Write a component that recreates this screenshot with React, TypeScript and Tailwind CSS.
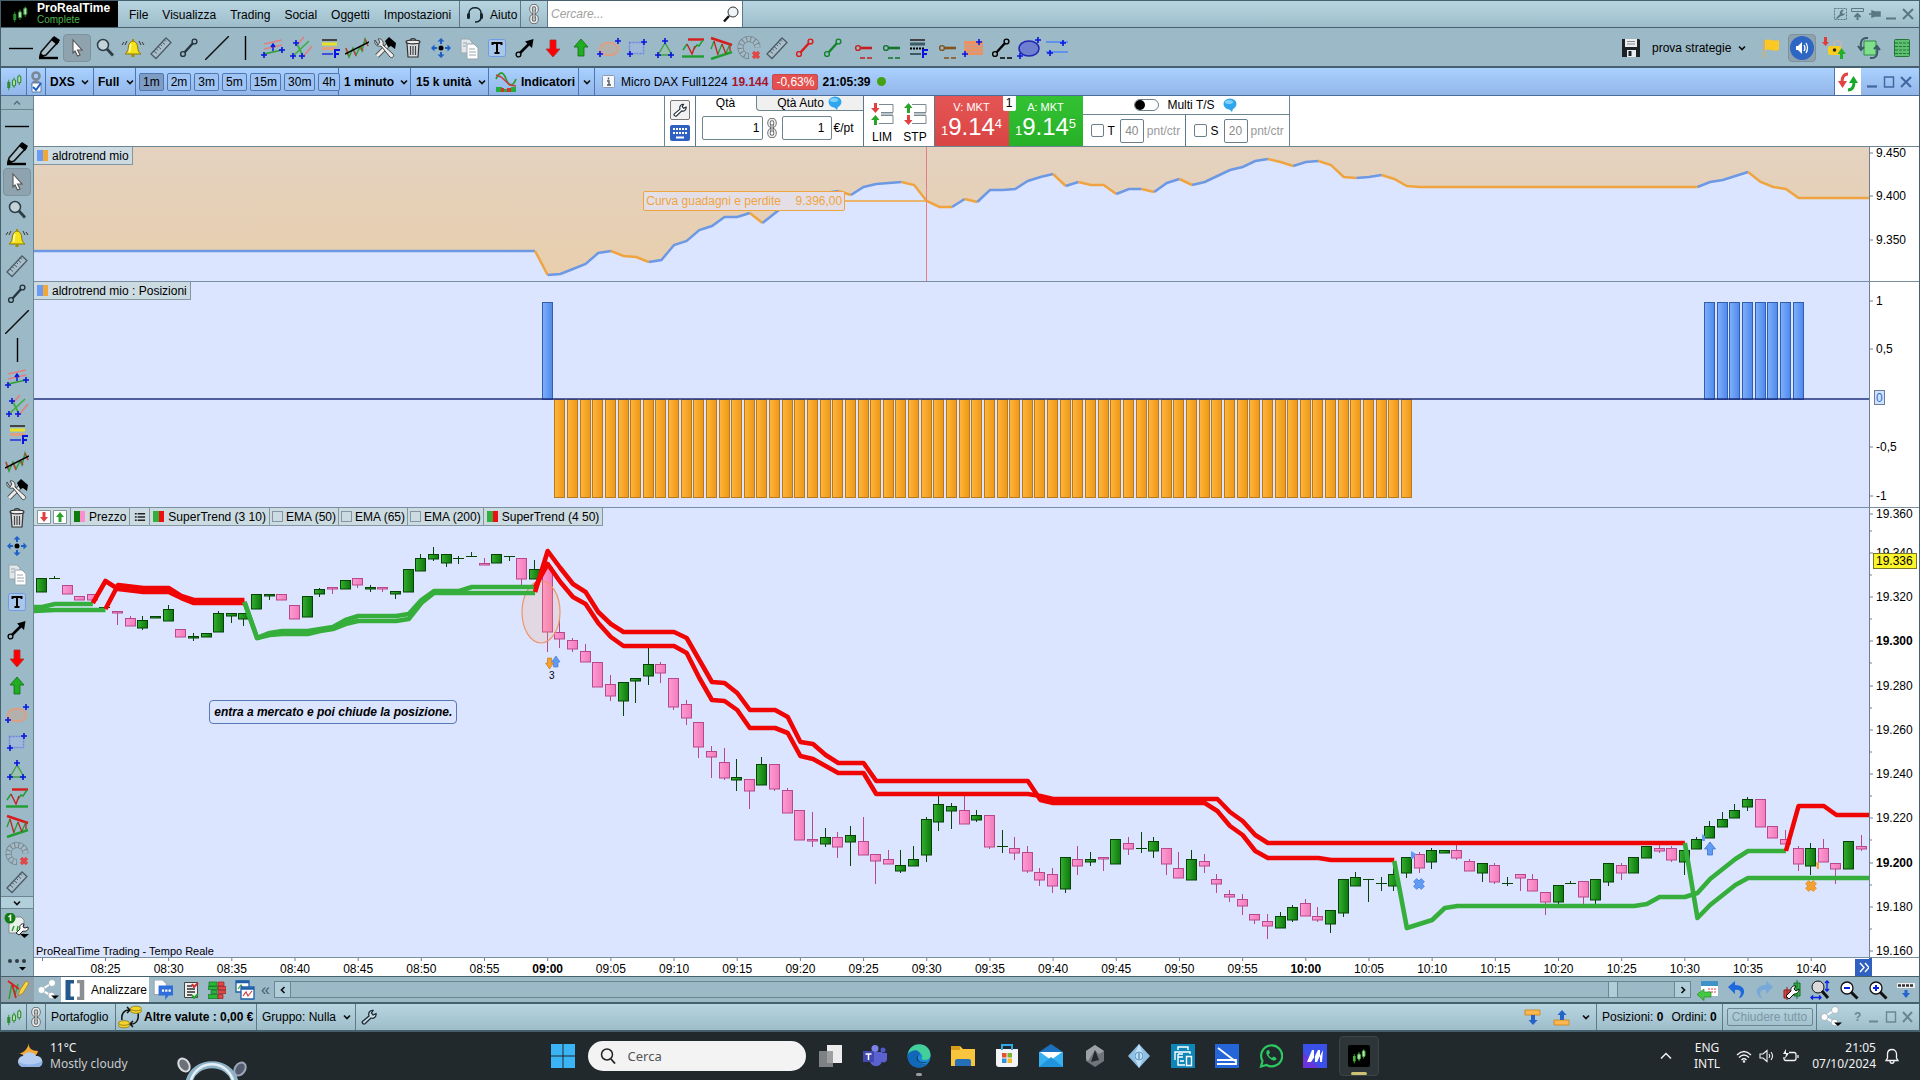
import type { ReactNode } from "react";

type IconProps = { children: ReactNode; size?: string; box?: string };

function Icon({ children, size = "size-6", box = "0 0 24 24" }: IconProps) {
  return (
    <svg viewBox={box} className={`${size} shrink-0`} fill="none" aria-hidden="true">
      {children}
    </svg>
  );
}

function Plus({ x, y }: { x: number; y: number }) {
  return <path d={`M${x - 3} ${y}h6M${x} ${y - 3}v6`} stroke="#0a14e0" strokeWidth="1.6" />;
}

function Segment({ color, dashed }: { color: string; dashed?: boolean }) {
  return (
    <Icon>
      <path d="M7 17 17 6" stroke={color} strokeWidth="2.4" />
      <circle cx="6" cy="18" r="2.4" fill="#9bb9c7" stroke={color} strokeWidth="1.4" />
      <circle cx="17.5" cy="5.5" r="2.4" fill="#9bb9c7" stroke={color} strokeWidth="1.4" />
      {dashed && <path d="M11 22h5M18 22h5" stroke={color} strokeWidth="1.4" />}
    </Icon>
  );
}

function Ray({ color }: { color: string }) {
  return (
    <Icon>
      <path d="M9 12h14" stroke={color} strokeWidth="2.6" />
      <circle cx="9" cy="12" r="2.4" fill="#9bb9c7" stroke={color} strokeWidth="1.4" />
      <path d="M11 22h5M18 22h5" stroke={color} strokeWidth="1.3" />
    </Icon>
  );
}

function Ruler() {
  return (
    <Icon>
      <path d="M2 18 17 2l5 4.5L7 22.5z" stroke="#4d5c68" strokeWidth="1.3" fill="#a9bfca" />
      <path d="m5 15 3 2.5m-1-5 2 2m0-4 3 2.5m-1-5 2 2m0-4 3 2.5m-1-5 2 2" stroke="#4d5c68" />
    </Icon>
  );
}

function Candles({ size = "size-5", color = "#2e8b2e" }: { size?: string; color?: string }) {
  return (
    <Icon size={size}>
      <path d="M5 9v14M12 6v14M19 2v14" stroke={color} strokeWidth="1.2" />
      <path d="M3 12h4v8H3z" fill={color} />
      <rect x="10" y="9" width="4" height="8" rx="1.5" fill="#bfe0c0" stroke={color} strokeWidth="1.5" />
      <rect x="17" y="4" width="4" height="9" rx="1.5" fill="#bfe0c0" stroke={color} strokeWidth="1.5" />
    </Icon>
  );
}

function Chain() {
  return (
    <Icon size="h-[20px] w-[14px]" box="0 0 14 20">
      <rect x="4" y="1.5" width="6" height="7" rx="3" stroke="#666" strokeWidth="3.4" />
      <rect x="4" y="11.5" width="6" height="7" rx="3" stroke="#666" strokeWidth="3.4" />
      <rect x="4" y="1.5" width="6" height="7" rx="3" stroke="#eee" strokeWidth="1.6" />
      <rect x="4" y="11.5" width="6" height="7" rx="3" stroke="#eee" strokeWidth="1.6" />
      <path d="M7 6v8" stroke="#555" strokeWidth="3" />
      <path d="M7 6v8" stroke="#eee" strokeWidth="1.2" />
    </Icon>
  );
}

function Chevron() {
  return (
    <Icon size="size-2" box="0 0 8 8">
      <path d="m1 2.5 3 3 3-3" stroke="#111" strokeWidth="1.7" />
    </Icon>
  );
}

function Wrench({ size = "size-4", fill = "#fff" }: { size?: string; fill?: string }) {
  return (
    <Icon size={size} box="0 0 16 16">
      <path
        d="M1.5 12.5 8 7C7 4 9 1 12 1.5L10.5 4l1.5 2 3-1.3C15.5 8 12.5 10 10 9L4 14.8c-1.5 1-3.5-1-2.5-2.3z"
        fill={fill}
        stroke="#1c2a33"
        strokeWidth="1.3"
      />
    </Icon>
  );
}

function Magnifier({ sign }: { sign: string }) {
  return (
    <Icon size="size-5" box="0 0 20 20">
      <circle cx="8" cy="8" r="6" fill="#fff" stroke="#111" strokeWidth="1.3" />
      <path d="m12 12 6.5 6.5" stroke="#111" strokeWidth="3" />
      <path d={sign} stroke="#0a20e0" strokeWidth="2" />
    </Icon>
  );
}

function Share() {
  return (
    <Icon size="size-[22px]" box="0 0 22 22">
      <path d="M15 4 4 11l11 6" stroke="#fff" strokeWidth="2" />
      <g fill="#fff" stroke="#8a9aa3" strokeWidth=".6">
        <circle cx="15" cy="4" r="3.5" />
        <circle cx="4.5" cy="11" r="3.5" />
        <circle cx="14.5" cy="16.5" r="3.3" />
      </g>
      <path d="M14 16.5h8l-4 3.5z" fill="#000" />
    </Icon>
  );
}

function Bubble() {
  return (
    <Icon size="size-[14px]" box="0 0 14 14">
      <ellipse cx="7" cy="6" rx="6.5" ry="5.5" fill="#2fa6ee" />
      <path d="m5 10 4 4 1.5-5z" fill="#2fa6ee" />
      <ellipse cx="6" cy="4" rx="4" ry="2" fill="#7fd0fa" />
    </Icon>
  );
}

function FibIcon({ dark }: { dark?: boolean }) {
  const lines = dark ? ["#3e5a66", "#000", "#3e5a66"] : ["#e8e020", "#e0a080", "#3f51d8"];
  return (
    <Icon>
      <path d="M5 4h15" stroke="#444" strokeWidth="2" />
      <path d="M5 8h15" stroke={lines[0]} strokeWidth="3" />
      <path d="M5 12.5h15" stroke={lines[1]} strokeWidth={dark ? 2 : 3} strokeDasharray={dark ? "2 1" : undefined} />
      <path d="M5 18h11" stroke={lines[2]} strokeWidth="2" />
      <path d="M18 22v-8h5M18 18h4" stroke="#0a14e0" strokeWidth="2" />
    </Icon>
  );
}

const tools: { name: string; icon: ReactNode }[] = [
  { name: "Linea orizzontale", icon: <Icon><path d="M0 12.5h24" stroke="#000" strokeWidth="1.4" /></Icon> },
  {
    name: "Matita",
    icon: (
      <Icon>
        <path d="M4 16 16 2l5 4L9 19l-6 2z" fill="#a9bfca" stroke="#111" strokeWidth="1.6" />
        <path d="m14 4 3-4 6 4-3 5zM3 17l5 3-6 2z" fill="#000" />
        <path d="M2 22h19" stroke="#000" strokeWidth="2.4" />
      </Icon>
    ),
  },
  {
    name: "Cursore",
    icon: (
      <Icon>
        <path d="m8 4 9 10h-4.500l2.500 5-2.500 1-2.500-5L8 17z" fill="#fff" stroke="#555" strokeWidth="1.1" />
      </Icon>
    ),
  },
  {
    name: "Zoom",
    icon: (
      <Icon>
        <circle cx="10" cy="9" r="5.5" fill="#c2d3da" stroke="#2f3d47" strokeWidth="1.5" />
        <path d="m14 13 6 6.5" stroke="#2f3d47" strokeWidth="2.8" />
      </Icon>
    ),
  },
  {
    name: "Allarme",
    icon: (
      <Icon>
        <path d="M4 18c3-2 3-4 3.500-8 .5-3 2-4.500 4.500-5 2.500.5 4 2 4.500 5 .5 4 .5 6 3.500 8z" fill="#f6e21c" stroke="#8c7a00" />
        <path d="M10 8c-1 2-1 5-1.500 8" stroke="#fff9a0" strokeWidth="1.8" />
        <path d="M10.500 18h3v3h-3zM11 3h2v2h-2z" fill="#a38d00" />
        <path d="M3 6 1 9m5-4L4 9m17-3 2 3m-5-4 2 4" stroke="#333" />
      </Icon>
    ),
  },
  { name: "Righello", icon: <Ruler /> },
  { name: "Segmento", icon: <Segment color="#26343d" /> },
  { name: "Linea", icon: <Icon><path d="M0 24 24 0" stroke="#111" strokeWidth="1.5" /></Icon> },
  { name: "Linea verticale", icon: <Icon><path d="M12.500 0v24" stroke="#000" strokeWidth="1.4" /></Icon> },
  {
    name: "Canale",
    icon: (
      <Icon>
        <path d="M3 8 21 4M3 13l18-4" stroke="#e08080" strokeWidth="1.7" />
        <path d="m3 18 18-4" stroke="#2e9e2e" strokeWidth="1.7" />
        <path d="M12 15V9m-2 2 2-3 2 3" stroke="#0a14e0" strokeWidth="1.4" />
        <Plus x={3} y={19} /><Plus x={21} y={14} />
      </Icon>
    ),
  },
  {
    name: "Forchetta",
    icon: (
      <Icon>
        <path d="m8 9 7-8m-1 20 9-11" stroke="#e08080" strokeWidth="1.7" />
        <path d="M4 20 20 5M8 8l6 12" stroke="#3fae3f" strokeWidth="1.7" />
        <Plus x={7} y={7} /><Plus x={4} y={20} /><Plus x={13} y={20} />
      </Icon>
    ),
  },
  { name: "Fibonacci", icon: <FibIcon /> },
  {
    name: "Regressione",
    icon: (
      <Icon>
        <path d="m1 12 3 9 4-9 3 7 4-8 2 4 3-12 3 7" stroke="#2e9e2e" strokeWidth="1.4" />
        <path d="m1 12 2 7m5-6 3 7m5-9 2 4m2-12 3 7" stroke="#c83c3c" strokeWidth="1.4" />
        <path d="M0 18 24 6" stroke="#000" strokeWidth="1.4" />
      </Icon>
    ),
  },
  {
    name: "Strumenti",
    icon: (
      <Icon>
        <path d="M17 7 4 20" stroke="#555" strokeWidth="5" />
        <path d="M17 7 4 20" stroke="#eee" strokeWidth="3" />
        <path d="m12 5 4-4 7 6-1 6-4-3-3 1z" fill="#000" />
        <path d="M2 4c-1 4 2 7 6 6l9 11c2 2 5-1 3-3L10 9c1-4-2-7-5-6l2 3-2 3z" fill="#eee" stroke="#444" />
      </Icon>
    ),
  },
  {
    name: "Cestino",
    icon: (
      <Icon>
        <path d="M6 7h12l-1 14H7z" fill="#d9dde0" stroke="#333" strokeWidth="1.2" />
        <path d="M9.500 10v9m2.500-9v9m2.500-9v9" stroke="#444" strokeWidth="1.2" />
        <ellipse cx="12" cy="6" rx="7" ry="1.8" fill="#eee" stroke="#333" strokeWidth="1.2" />
        <path d="M9.500 4c0-2 5-2 5 0" stroke="#333" strokeWidth="1.2" />
      </Icon>
    ),
  },
  {
    name: "Sposta",
    icon: (
      <Icon>
        <circle cx="12" cy="12" r="2.500" fill="#000" />
        <path d="M12 8V4M12 16v4M8 12H4M16 12h4" stroke="#1e5fc8" strokeWidth="2" />
        <path d="M8.500 5.500 12 2l3.500 3.500zM8.500 18.500 12 22l3.500-3.500zM5.500 8.500 2 12l3.500 3.500zM18.500 8.500 22 12l-3.500 3.500z" fill="#1e5fc8" />
      </Icon>
    ),
  },
  {
    name: "Copia",
    icon: (
      <Icon>
        <path d="M4 3h8l3 3v11H4z" fill="#dfe7eb" stroke="#9aa5ab" />
        <path d="M10 8h7l4 4v11H10z" fill="#fff" stroke="#9aa5ab" />
        <path d="M12 13h6m-6 3h7m-7 3h7M6 7h4m-4 3h3" stroke="#9aa5ab" />
      </Icon>
    ),
  },
  {
    name: "Testo",
    icon: (
      <Icon>
        <rect x="3.5" y="3.5" width="17" height="17" rx="2" fill="#aac6e8" stroke="#6f9be6" />
        <path d="M7.500 9V7h9v2M12 7v10m-2.500 0h5" stroke="#000" strokeWidth="2" />
      </Icon>
    ),
  },
  {
    name: "Freccia",
    icon: (
      <Icon>
        <path d="M6 18 17 7" stroke="#000" strokeWidth="2.6" />
        <path d="M12 5.500 20.500 3 19 12z" fill="#000" />
        <circle cx="5.5" cy="18.5" r="2.4" fill="#9bb9c7" stroke="#000" strokeWidth="1.3" />
      </Icon>
    ),
  },
  { name: "Freccia rossa", icon: <Icon><path d="M9 4h6v9h4l-7 8-7-8h4z" fill="#f00" stroke="#a33" strokeWidth=".8" /></Icon> },
  { name: "Freccia verde", icon: <Icon><path d="M9 20h6v-9h4l-7-8-7 8h4z" fill="#1fae1f" stroke="#176b17" strokeWidth=".8" /></Icon> },
  {
    name: "Ellisse",
    icon: (
      <Icon>
        <ellipse cx="12" cy="13" rx="9.500" ry="6.500" fill="#b4b0ac" stroke="#e89a78" strokeWidth="1.5" />
        <Plus x={21} y={5} /><Plus x={3} y={18} />
      </Icon>
    ),
  },
  {
    name: "Rettangolo",
    icon: (
      <Icon>
        <path d="M4.500 6.500h14v11h-14z" fill="#9fb8d8" stroke="#6f86e0" strokeWidth="1.4" strokeDasharray="2 1" />
        <Plus x={19} y={6} /><Plus x={5} y={18} />
      </Icon>
    ),
  },
  {
    name: "Triangolo",
    icon: (
      <Icon>
        <path d="m12 7-7 12h14z" fill="#9cc0b4" stroke="#3fa04a" strokeWidth="1.4" />
        <Plus x={12} y={5} /><Plus x={5} y={19} /><Plus x={18} y={19} />
      </Icon>
    ),
  },
  {
    name: "Doppio massimo",
    icon: (
      <Icon>
        <path d="M7 3.500h16" stroke="#d81c1c" strokeWidth="2.4" />
        <path d="M1 20.500h22" stroke="#1e9e2e" strokeWidth="2.4" />
        <path d="m2 14 4-6m7 5 3-4 2 1 4-6" stroke="#1e9e2e" strokeWidth="1.4" />
        <path d="m6 8 5 10 3-8" stroke="#c82020" strokeWidth="1.4" />
      </Icon>
    ),
  },
  {
    name: "Cuneo",
    icon: (
      <Icon>
        <path d="m2 2 21 7" stroke="#d81c1c" strokeWidth="2.4" />
        <path d="m2 23 21-7" stroke="#1e9e2e" strokeWidth="2.4" />
        <path d="m2 13 3-8m4 13 4-10m4 9 4-9" stroke="#1e9e2e" strokeWidth="1.3" />
        <path d="m5 5 4 14m4-11 4 10m4-9v6" stroke="#c82020" strokeWidth="1.3" />
      </Icon>
    ),
  },
  {
    name: "Gann",
    icon: (
      <Icon>
        <path d="M20.500 11.500A8.500 8.500 0 1 0 12 20" stroke="#75858f" strokeWidth="6" />
        <path d="M20.500 11.500A8.500 8.500 0 1 0 12 20" stroke="#a4bac5" strokeWidth="4.600" strokeDasharray="3 1" />
        <path d="m16 16 6 6m0-6-6 6" stroke="#e04848" strokeWidth="3.400" />
      </Icon>
    ),
  },
  { name: "Misura", icon: <Ruler /> },
  { name: "Segmento rosso", icon: <Segment color="#e01818" /> },
  { name: "Segmento verde", icon: <Segment color="#12852a" /> },
  { name: "Semiretta rossa", icon: <Ray color="#c81e1e" /> },
  { name: "Semiretta verde", icon: <Ray color="#12752a" /> },
  { name: "Ritracciamento", icon: <FibIcon dark /> },
  { name: "Semiretta marrone", icon: <Ray color="#80521c" /> },
  {
    name: "Zona",
    icon: (
      <Icon>
        <path d="M3 5h19v14H3z" fill="#f0905c" />
        <path d="M3 9h19M3 12h19M3 16h19" stroke="#c8a090" strokeWidth="1.5" />
        <Plus x={18} y={6} /><Plus x={4} y={18} />
      </Icon>
    ),
  },
  { name: "Segmento nero", icon: <Segment color="#000" dashed /> },
  {
    name: "Ellisse blu",
    icon: (
      <Icon>
        <ellipse cx="12" cy="12.500" rx="10" ry="7.500" fill="#6f7fd0" stroke="#2226b4" strokeWidth="1.5" />
        <Plus x={21} y={4} /><Plus x={3} y={20} />
      </Icon>
    ),
  },
  {
    name: "Parallele",
    icon: (
      <Icon>
        <path d="M1 6h22M1 16h22" stroke="#5f92ee" strokeWidth="2.2" />
        <path d="M12 22h10" stroke="#8fb2ee" />
        <Plus x={18} y={7} /><Plus x={5} y={17} />
      </Icon>
    ),
  },
];

function ToolButton({ name, icon }: { name: string; icon: ReactNode }) {
  const active = name === "Cursore";
  return (
    <button
      aria-label={name}
      className={`flex size-7 shrink-0 items-center justify-center rounded-sm border ${
        active ? "border-[#7c929e] bg-[#8fa3ae]" : "border-transparent"
      }`}
    >
      {icon}
    </button>
  );
}

function Drop({ label, value, bold = true }: { label: string; value: string; bold?: boolean }) {
  return (
    <label className="flex h-full items-center gap-1.5">
      <select aria-label={label} className={`appearance-none bg-transparent ${bold ? "font-bold" : ""}`}>
        <option>{value}</option>
      </select>
      <Chevron />
    </label>
  );
}

/* ---------- data ---------- */

const STEP = 12.635;
const barX = (i: number) => 42.3 + i * STEP;

// colour, body top, body bottom, wick top, wick bottom; one candle per minute from 08:20
const candles =
  "g 578 592 578 592|g 578 578 576 579|p 585 594 585 594|p 596 600 596 600|p 594 600 594 600|g 607 607 607 607|p 611 613 611 625|p 618 626 616 626|g 620 628 616 630|g 616 618 616 618|" +
  "g 609 621 605 621|p 629 637 629 637|g 636 638 633 641|g 633 637 633 637|g 613 632 611 632|g 613 616 613 623|g 613 619 613 626|g 594 609 594 609|g 594 596 594 600|p 594 600 594 600|" +
  "p 605 619 605 619|g 596 617 596 617|g 589 594 588 597|p 587 589 587 594|g 580 589 580 589|p 578 585 578 588|g 587 589 585 592|p 587 589 587 592|g 591 594 591 599|g 569 592 569 592|" +
  "g 558 571 554 571|g 554 559 547 561|g 554 563 554 567|g 558 558 556 564|g 556 556 552 557|p 563 565 558 565|g 554 563 554 563|g 556 556 556 561|p 558 579 558 588|g 569 579 560 579|" +
  "p 567 632 567 652|p 632 639 617 648|p 640 649 638 652|p 651 662 644 662|p 662 687 662 687|p 684 696 675 701|g 682 701 682 716|g 678 681 678 703|g 664 676 647 685|p 664 673 662 683|" +
  "p 678 707 678 710|p 704 718 700 725|p 722 747 722 758|p 751 757 746 778|p 762 778 748 780|g 777 780 759 791|p 779 791 779 809|g 764 785 757 785|p 764 789 764 791|p 790 813 788 813|" +
  "p 810 840 810 840|p 839 841 812 847|g 837 844 828 847|p 837 847 832 858|g 835 842 826 866|p 841 855 817 855|p 854 861 854 884|p 859 864 850 864|g 865 871 850 873|g 859 866 846 866|" +
  "g 819 855 817 862|g 804 822 795 831|g 806 811 803 829|p 810 824 796 824|g 815 820 810 822|p 815 847 815 849|g 846 846 830 853|p 848 853 837 860|p 852 871 846 873|p 872 880 868 886|" +
  "p 874 886 868 893|g 857 889 857 893|p 859 866 846 875|g 859 862 852 866|p 857 859 857 871|g 839 864 839 864|p 843 849 837 855|g 848 848 832 853|g 841 851 837 858|p 848 864 848 875|" +
  "p 868 878 852 878|g 859 880 850 880|p 861 866 854 873|p 879 884 874 893|p 894 897 890 902|p 899 906 894 915|p 914 920 914 924|p 921 926 914 939|g 916 928 912 928|g 907 920 905 922|" +
  "p 903 916 899 916|p 916 920 907 922|g 910 924 910 933|g 879 913 879 917|g 877 886 872 886|g 879 879 879 902|g 883 883 877 891|g 874 886 862 891|g 857 873 857 878|p 854 868 852 873|" +
  "g 850 862 848 869|g 850 853 850 853|p 850 858 841 860|p 861 871 859 871|g 863 873 863 882|p 865 882 863 884|g 883 883 877 886|p 874 878 874 891|p 879 891 874 891|p 892 902 892 915|" +
  "g 885 902 885 904|g 883 883 881 884|p 881 897 881 906|g 879 900 879 904|g 863 882 863 886|p 865 873 863 880|g 857 873 857 873|g 846 858 846 858|p 848 851 845 853|p 848 860 846 862|" +
  "g 850 862 850 875|g 839 849 837 849|g 826 838 821 838|g 819 827 812 827|g 810 818 804 818|g 799 807 797 811|p 799 827 799 827|p 826 838 826 838|p 839 844 830 844|p 848 864 846 871|" +
  "g 848 866 843 875|p 848 862 839 862|p 863 869 863 884|g 841 869 841 869|p 846 849 835 851";

const candleRows = candles.split("|").map((row) => {
  const [kind, ...ys] = row.split(" ");
  return { up: kind === "g", ys: ys.map(Number) };
});

type Point = [number, number];

const trends: { color: string; points: Point[] }[] = [
  { color: "#35ae3c", points: [[-0.7, 607], [0, 607], [1, 604], [4, 604]] },
  { color: "#35ae3c", points: [[-0.7, 611], [1, 610], [5, 610]] },
  { color: "#f00505", points: [[4, 603], [5, 581], [6, 589], [8, 592], [10, 592], [11, 598], [12, 603], [16, 603]] },
  { color: "#f00505", points: [[5, 609], [6, 585], [8, 588], [10, 588], [11, 596], [12, 600], [16, 600]] },
  {
    color: "#35ae3c",
    points: [[16, 602], [17, 638], [18, 633], [19, 631], [21, 631], [22, 629], [23, 627], [24, 620], [25, 616], [28, 616], [29, 614], [30, 600], [31, 591], [33, 591], [34, 587], [39, 587]],
  },
  {
    color: "#35ae3c",
    points: [[16, 602], [17, 638], [18, 635], [19, 634], [21, 634], [22, 631], [23, 629], [24, 624], [25, 621], [28, 621], [29, 619], [30, 603], [31, 593], [39, 593]],
  },
  {
    color: "#f00505",
    points: [[39, 592], [40, 551], [41, 568], [42, 584], [43, 592], [44, 612], [45, 624], [46, 632], [50, 632], [51, 638], [52, 660], [53, 682], [54, 683], [55, 693], [56, 710], [58, 710], [59, 717], [60, 742], [61, 744], [62, 755], [63, 763], [65, 763], [66, 781], [78, 781], [79, 800], [80, 803], [92, 803], [93, 811], [94, 826], [95, 835], [96, 851], [97, 858], [101, 858], [102, 860], [107, 860]],
  },
  {
    color: "#f00505",
    points: [[39, 587], [40, 564], [41, 582], [42, 597], [43, 604], [44, 623], [45, 637], [46, 646], [50, 646], [51, 653], [52, 678], [53, 700], [54, 701], [55, 710], [56, 728], [58, 728], [59, 733], [60, 756], [61, 759], [62, 766], [63, 773], [65, 773], [66, 794], [78, 794], [79, 796], [80, 799], [93, 799], [94, 812], [95, 821], [96, 835], [97, 843], [130, 843]],
  },
  {
    color: "#35ae3c",
    points: [[107, 861], [108, 928], [109, 924], [110, 920], [111, 908], [112, 906], [126, 906], [127, 904], [128, 897], [130, 897], [131, 893], [132, 879], [133, 869], [134, 859], [135, 851], [138, 851]],
  },
  { color: "#35ae3c", points: [[130, 843], [131, 918], [132, 905], [133, 895], [134, 885], [135, 878], [144.7, 878]] },
  { color: "#f00505", points: [[138, 851], [139, 806], [141, 806], [142, 815], [144.7, 815]] },
];

// profit curve from 08:59 to 10:09, one value per minute
const profit = [
  251, 275, 274, 269, 264, 253, 251, 256, 257, 262, 260, 245, 241, 230, 226, 217, 217, 213, 223, 213, 203, 198, 195, 193,
  191, 195, 187, 184, 183, 182, 185, 201, 207, 207, 199, 202, 190, 190, 189, 181, 177, 174, 186, 182, 185, 185, 194, 189,
  189, 192, 183, 179, 185, 182, 176, 170, 167, 161, 159, 162, 166, 162, 161, 165, 177, 178, 177, 175, 179, 186, 187,
];
const curve: Point[] = [
  [-0.7, 251],
  ...profit.map((y, k): Point => [39 + k, y]),
  [131, 187], [132, 182], [133, 180], [134, 176], [135, 172], [136, 182], [137, 187], [138, 189], [139, 198], [144.7, 198],
];
const toPoints = (pts: Point[]) => pts.map(([i, y]) => `${barX(i)},${y}`).join(" ");

function curveRuns() {
  const runs: { color: string; points: Point[] }[] = [];
  let color = "#6c98e4";
  for (let k = 1; k < curve.length; k++) {
    const diff = curve[k][1] - curve[k - 1][1];
    if (diff > 0) color = "#f0a440";
    if (diff < 0) color = "#6c98e4";
    const last = runs[runs.length - 1];
    if (last && last.color === color) last.points.push(curve[k]);
    else runs.push({ color, points: [curve[k - 1], curve[k]] });
  }
  return runs;
}

const longs = [40, 132, 133, 134, 135, 136, 137, 138, 139];
const shorts = Array.from({ length: 68 }, (_, k) => 41 + k);
const times = Array.from({ length: 28 }, (_, k) => {
  const minutes = 505 + k * 5;
  return `${String(Math.floor(minutes / 60)).padStart(2, "0")}:${String(minutes % 60).padStart(2, "0")}`;
});
const prices = Array.from({ length: 20 }, (_, k) => 19350 - k * 10);
const priceY = (p: number) => 862.6 - (p - 19200) * 2.2125;
const formatPrice = (p: number) => `19.${p - 19000}`;

/* ---------- charts ---------- */

function Pane({ height, plot, axis }: { height: string; plot: ReactNode; axis: ReactNode }) {
  return (
    <div className={`flex border-b border-[#7a90a0] ${height}`}>
      <div className="relative min-w-0 flex-1 bg-[#dbe5ff]">{plot}</div>
      <div className="w-[50px] shrink-0 border-l border-[#6d7f96] bg-white">{axis}</div>
    </div>
  );
}

function AxisLabel({ y, text, bold }: { y: number; text: string; bold?: boolean }) {
  return (
    <>
      <path d={`M1869 ${y}h4`} stroke="#6d7f96" />
      <text x="1876" y={y + 4} fontWeight={bold ? 700 : 400}>{text}</text>
    </>
  );
}

const chip = "flex h-[18px] items-center border-r border-b border-[#8496a0] bg-[#ccdbe2] whitespace-nowrap";

function Chip({ a, b, children }: { a?: string; b?: string; children: ReactNode }) {
  return (
    <span className={`${chip} gap-1 px-[3px]`}>
      {a && (
        <Icon size="h-[11px] w-[11px]" box="0 0 11 11">
          <path d="M0 0h6v11H0z" fill={a} />
          <path d="M6 0h5v11H6z" fill={b} />
        </Icon>
      )}
      {children}
    </span>
  );
}

function EmaChip({ label }: { label: string }) {
  return (
    <label className={`${chip} gap-[3px] px-0.5`}>
      <input type="checkbox" className="size-[11px] appearance-none border border-[#8496a0]" />
      {label}
    </label>
  );
}

function ProfitPane() {
  return (
    <Pane
      height="h-[135px]"
      plot={
        <>
          <svg viewBox="34 147 1835 134" preserveAspectRatio="none" className="block h-full w-full" fill="none">
            <defs>
              <linearGradient id="sand" x1="0" y1="0" x2="0" y2="1">
                <stop offset="0" stopColor="#e4d2c0" />
                <stop offset="1" stopColor="#e8ceac" />
              </linearGradient>
            </defs>
            <polygon points={`34,147 ${toPoints(curve)} 1870,147`} fill="url(#sand)" />
            {curveRuns().map((run, k) => (
              <polyline key={k} points={toPoints(run.points)} stroke={run.color} strokeWidth="2.500" />
            ))}
            <path d="M926.500 147v134" stroke="#e07f88" />
            <path d="M845 201h82" stroke="#f0a440" strokeWidth="1.3" />
          </svg>
          <div className="absolute top-0 left-0"><Chip a="#6a9cf4" b="#f0a838">aldrotrend mio</Chip></div>
          <div className="absolute top-[44px] left-[33.2%] flex h-[20px] w-[202px] items-center justify-between rounded-xs border border-[#f0a440] bg-[#e4dfe6] px-0.5 text-[#f0a440]">
            <span>Curva guadagni e perdite</span>
            <span>9.396,00</span>
          </div>
        </>
      }
      axis={
        <svg viewBox="1870 147 49 134" className="h-[134px] w-[49px]" fontSize="12">
          <AxisLabel y={153} text="9.450" />
          <AxisLabel y={196} text="9.400" />
          <AxisLabel y={240} text="9.350" />
        </svg>
      }
    />
  );
}

function PositionsPane() {
  return (
    <Pane
      height="h-[226px]"
      plot={
        <>
          <svg viewBox="34 282 1835 225" preserveAspectRatio="none" className="block h-full w-full" fill="none">
            <defs>
              <linearGradient id="long">
                <stop offset="0" stopColor="#7fb0fa" />
                <stop offset="1" stopColor="#4d88ec" />
              </linearGradient>
              <linearGradient id="short">
                <stop offset="0" stopColor="#ffb63c" />
                <stop offset="1" stopColor="#ee9716" />
              </linearGradient>
            </defs>
            {longs.map((i) => (
              <rect key={i} x={Math.round(barX(i)) - 5.5} y="302.5" width="10" height="97" fill="url(#long)" stroke="#2f5fae" />
            ))}
            {shorts.map((i) => (
              <rect key={i} x={Math.round(barX(i)) - 5.5} y="399.5" width="10" height="98" fill="url(#short)" stroke="#b87a1c" />
            ))}
            <path d="M34 399h1835" stroke="#20307c" strokeWidth="1.4" />
          </svg>
          <div className="absolute top-0 left-0"><Chip a="#6a9cf4" b="#f0a838">aldrotrend mio : Posizioni</Chip></div>
        </>
      }
      axis={
        <svg viewBox="1870 282 49 225" className="h-[225px] w-[49px]" fontSize="12">
          <AxisLabel y={301} text="1" />
          <AxisLabel y={349} text="0,5" />
          <AxisLabel y={447} text="-0,5" />
          <AxisLabel y={496} text="-1" />
          <rect x="1874.5" y="390.5" width="10" height="14" fill="#cfe2ff" stroke="#6d7f96" />
          <text x="1876" y="402" fill="#2f6fd0">0</text>
        </svg>
      }
    />
  );
}

function Cross({ x, y, color, edge }: { x: number; y: number; color: string; edge: string }) {
  return (
    <g>
      <path d={`M${x - 4} ${y - 4}l8 8m0-8-8 8`} stroke={edge} strokeWidth="5" />
      <path d={`M${x - 4} ${y - 4}l8 8m0-8-8 8`} stroke={color} strokeWidth="4" />
    </g>
  );
}

function PricePane() {
  return (
    <Pane
      height="h-[450px]"
      plot={
        <>
          <svg viewBox="34 508 1835 449" preserveAspectRatio="none" className="block h-full w-full" fill="none">
            <defs>
              <linearGradient id="up">
                <stop offset="0" stopColor="#35ae30" />
                <stop offset="1" stopColor="#0c780c" />
              </linearGradient>
              <linearGradient id="down">
                <stop offset="0" stopColor="#ff9ad4" />
                <stop offset="1" stopColor="#f07cba" />
              </linearGradient>
            </defs>
            {candleRows.map(({ up, ys: [top, bottom, high, low] }, i) => {
              const x = Math.round(barX(i));
              const edge = up ? "#064406" : "#b8488c";
              return (
                <g key={i} stroke={edge}>
                  {low > high && <path d={`M${x - 0.5} ${high}V${low}`} />}
                  {bottom > top ? (
                    <rect x={x - 5.5} y={top + 0.5} width="10" height={bottom - top - 0.5} fill={up ? "url(#up)" : "url(#down)"} />
                  ) : (
                    <path d={`M${x - 6} ${top + 0.5}h11`} />
                  )}
                </g>
              );
            })}
            <g fill="#5f9af4">
              <path d="m1411 851 5 3-3 5h-2zM1702 834l3 2v5h-3z" />
              <path d="M1707.500 855v-6h-3l5.500-7 5.500 7h-3v6z" stroke="#3f74d0" strokeWidth=".8" />
              <path d="M553.500 667v-5h-2l4.500-6 4 6h-2v5z" stroke="#3f74d0" strokeWidth=".6" />
            </g>
            <path d="M547.500 658v5h-2l4 6 4-6h-2v-5z" fill="#f5a030" stroke="#b87418" strokeWidth=".6" />
            <path d="m1816 862 3 1v6h-2z" fill="#f5a030" />
            <ellipse cx="541" cy="612" rx="19" ry="31" fill="#ffa064" fillOpacity=".18" stroke="#f09468" strokeWidth="1.2" />
            {trends.map((line, k) => (
              <polyline key={k} points={toPoints(line.points)} stroke={line.color} strokeWidth="4.600" strokeLinejoin="round" />
            ))}
            <Cross x={1419} y={884} color="#5f9af4" edge="#3f74d0" />
            <Cross x={1811} y={886} color="#f5a030" edge="#c88020" />
            <text x="549" y="679" fontSize="10" fill="#000">3</text>
          </svg>
          <div className="absolute top-0 left-0 flex">
            <span className={`${chip} gap-0.5 px-[3px]`}>
              <Icon size="size-[14px]" box="0 0 14 14">
                <path d="M.5.5h13v13H.5z" fill="#fff" stroke="#8496a0" />
                <path d="M5.500 2h3v5H11l-4 5-4-5h2.500z" fill="#e04040" />
              </Icon>
              <Icon size="size-[14px]" box="0 0 14 14">
                <path d="M.5.5h13v13H.5z" fill="#fff" stroke="#8496a0" />
                <path d="M5.500 12h3V7H11L7 2 3 7h2.500z" fill="#28a428" />
              </Icon>
            </span>
            <Chip a="#0c7c0c" b="#ff8ccc">Prezzo</Chip>
            <Chip>
              <Icon size="h-[12px] w-[13px]" box="0 0 14 12">
                <path d="M2 2.500h2m1 0h8M2 6h2m1 0h8M2 9.500h2m1 0h8" stroke="#222" strokeWidth="1.5" />
              </Icon>
            </Chip>
            <Chip a="#35ae3c" b="#ee1010">SuperTrend (3 10)</Chip>
            <EmaChip label="EMA (50)" />
            <EmaChip label="EMA (65)" />
            <EmaChip label="EMA (200)" />
            <Chip a="#35ae3c" b="#ee1010">SuperTrend (4 50)</Chip>
          </div>
          <div className="absolute top-[192px] left-[9.55%] flex h-[24px] items-center rounded-sm border border-[#5878b8] px-1 font-bold whitespace-nowrap italic">
            entra a mercato e poi chiude la posizione.
          </div>
          <div className="absolute bottom-0 left-0.5 text-[11px] leading-[11px]">ProRealTime Trading - Tempo Reale</div>
        </>
      }
      axis={
        <svg viewBox="1870 508 49 449" className="h-[449px] w-[49px]" fontSize="12">
          <AxisLabel y={514} text="19.360" />
          {prices.map((p) =>
            p % 20 === 0 ? (
              <AxisLabel key={p} y={Math.round(priceY(p))} text={formatPrice(p)} bold={p % 100 === 0} />
            ) : (
              <path key={p} d={`M1870 ${Math.round(priceY(p))}h2`} stroke="#6d7f96" />
            ),
          )}
          <rect x="1873.5" y="553.5" width="43" height="15" fill="#fbf428" stroke="#77772a" />
          <text x="1876" y="565">19.336</text>
        </svg>
      }
    />
  );
}

function TimeAxis() {
  return (
    <div className="flex h-[18px] bg-white">
      <svg viewBox="34 958 1835 18" preserveAspectRatio="none" className="h-[18px] min-w-0 flex-1" fontSize="12">
        <path d="M42.500 958v3" stroke="#6d7f96" />
        {times.map((t, k) => (
          <g key={t}>
            <path d={`M${barX(5 + k * 5)} 958v3`} stroke="#6d7f96" />
            <text x={barX(5 + k * 5)} y="973" textAnchor="middle" fontWeight={t.endsWith(":00") ? 700 : 400}>
              {t}
            </text>
          </g>
        ))}
        <path d="M1855 959h14v17h-14z" fill="#2f62c0" />
        <path d="m1860 963 4 4.500-4 4.500m5-9 4 4.500-4 4.500" stroke="#fff" strokeWidth="1.4" fill="none" />
      </svg>
      <div className="w-[50px] shrink-0">
        <div className="h-full w-[3px] bg-[#2f62c0]" />
      </div>
    </div>
  );
}

/* ---------- chrome ---------- */

const sep = "border-r border-[#5c7889]";

function MenuBar() {
  return (
    <header className="flex h-7 items-stretch border-y border-[#47606e] bg-linear-to-b from-[#b7d5e1] to-[#9ebdca]">
      <div className="flex w-[117px] items-center gap-2 bg-black pl-2.5">
        <Candles size="size-[18px]" />
        <div className="leading-[12px]">
          <div className="font-bold text-white">ProRealTime</div>
          <div className="text-[10px] text-[#4fb04c]">Complete</div>
        </div>
      </div>
      <nav className={`flex w-[342px] items-center gap-3.5 pt-0.5 pl-[11px] ${sep}`}>
        {["File", "Visualizza", "Trading", "Social", "Oggetti", "Impostazioni"].map((item) => (
          <button key={item}>{item}</button>
        ))}
      </nav>
      <button className={`flex w-[61px] items-center gap-1.5 pt-0.5 pl-1.5 ${sep}`}>
        <Icon size="size-[18px]" box="0 0 18 18">
          <path d="M3 10V7c0-7 12-7 12 0v4c0 3-2 5-6 5" stroke="#16242c" strokeWidth="1.5" />
          <rect x="1" y="7" width="3" height="6" rx="1.5" fill="#16242c" />
          <rect x="14" y="7" width="3" height="6" rx="1.5" fill="#16242c" />
        </Icon>
        Aiuto
      </button>
      <div className={`flex w-[27px] items-center justify-center ${sep}`}><Chain /></div>
      <label className={`flex w-[195px] items-center bg-white pr-0.5 ${sep}`}>
        <input aria-label="Cercare" placeholder="Cercare..." className="w-[174px] pl-[3px] italic outline-none placeholder:text-[#a0a0a0]" />
        <Icon size="size-[18px]" box="0 0 18 18">
          <circle cx="11" cy="7" r="5" stroke="#333" fill="#eef4f7" />
          <path d="m7 11-5 5.500" stroke="#111" strokeWidth="2.4" />
        </Icon>
      </label>
      <div className="ml-auto flex items-center gap-px pr-1">
        <Icon size="h-4 w-[66px]" box="0 0 66 16">
          <path d="M.5 2.500h12v11H.5z" stroke="#5c7784" strokeDasharray="2 1" />
          <path d="m2 12 4-4c-1-3 2-5 4-4L8 6l1 2 2-1c0 2-2 3-4 3l-4 3z" fill="#5c7784" />
          <path d="M17.500 2.500h12v3h-12z" stroke="#5c7784" />
          <path d="M23.500 14V8m-3 3 3-3 3 3" stroke="#5c7784" strokeWidth="2" />
          <path d="M35 8h3m0-3v6l3-1h5V6h-5z" stroke="#5c7784" strokeWidth="1.5" fill="#5c7784" />
          <path d="M52 12.500h10" stroke="#5c7784" strokeWidth="2" />
        </Icon>
        <Icon size="size-3.5" box="0 0 14 14"><path d="m2 2 10 10m0-10L2 12" stroke="#5c7784" strokeWidth="2" /></Icon>
      </div>
    </header>
  );
}

function ToolBar() {
  return (
    <div className="flex h-10 items-center border-b-2 border-[#47606e] pt-0.5 pl-1.5">
      {tools.map((tool) => <ToolButton key={tool.name} {...tool} />)}
      <div className="ml-auto flex items-center pr-px">
        <Icon size="size-[20px]" box="0 0 20 20">
          <path d="M1 1h17l1 1v17H1z" fill="#1c2226" />
          <path d="M4 1h12v8H4zM6 12h9v7H6z" fill="#e9edef" />
          <path d="M6 3.500h8M6 6h8" stroke="#888" />
          <path d="M7.500 13h3v5h-3z" fill="#1c2226" />
        </Icon>
        <div className="mr-2 ml-[11px]"><Drop label="Layout" value="prova strategie" bold={false} /></div>
        <button aria-label="Segnala" className="flex w-[34px] items-center justify-center">
          <Icon size="size-[22px]" box="0 0 22 22">
            <path d="M4 3v18" stroke="#c8b080" strokeWidth="2" />
            <path d="M5 3c4-2 8 2 14 0v10c-6 2-10-2-14 0z" fill="#fbc824" />
          </Icon>
        </button>
        <button aria-label="Audio" className="flex h-7 w-[28px] items-center justify-center rounded-sm border border-[#7c929e] bg-[#8fa3ae]">
          <Icon>
            <circle cx="12" cy="12" r="12" fill="#2e66c4" />
            <path d="M6 10h2l4-4v12l-4-4H6z" fill="#fff" />
            <path d="M14 9q2 3 0 6m2-8q3 5 0 10" stroke="#fff" strokeWidth="1.3" />
          </Icon>
        </button>
        <button aria-label="Blocco ordini" className="flex w-[36px] items-center justify-center">
          <Icon>
            <path d="M12 12V8c0-4 7-4 7 0v4" stroke="#b8b8b8" strokeWidth="2.2" />
            <rect x="6" y="10" width="13" height="9" rx="2" fill="#f7cf22" />
            <circle cx="12.500" cy="14" r="1.800" fill="#332600" />
            <path d="M2 1h3v5h2l-3.500 4L0 6h2z" fill="#e03c3c" />
            <path d="M18 23h3v-5h3l-4.500-6-4 6H18z" fill="#22b02c" />
          </Icon>
        </button>
        <button aria-label="Ruota" className="flex w-[33px] items-center justify-center">
          <Icon>
            <path d="M7 5h12v14H7z" fill="#7fe08c" stroke="#2f8a46" />
            <path d="M11 2C4 1 3 7 4 13m-3-3 3 4 3-3M13 22c8 1 8-6 7-11m3 3-3-4-3 3" stroke="#3e5a66" strokeWidth="2" />
          </Icon>
        </button>
        <button aria-label="Server" className="flex w-[33px] items-center justify-center">
          <Icon size="size-5" box="0 0 20 20">
            <rect x="2.5" y="1.5" width="15" height="17" rx="1" fill="#5cc070" stroke="#23753a" />
            <path d="M3 5h14M3 8.500h14M3 12h14M3 15.500h14" stroke="#23753a" strokeDasharray="3 1" />
          </Icon>
        </button>
      </div>
    </div>
  );
}

const frames = ["1m", "2m", "3m", "5m", "15m", "30m", "4h"];
const blueSep = "border-r border-[#4a76b4]";

function ChartBar() {
  return (
    <div className="flex h-7 items-stretch border-b border-[#4a6c98] bg-linear-to-b from-[#aad1ff] to-[#92b6e8]">
      <div className={`flex w-[26px] items-center justify-center ${blueSep}`}><Candles size="size-[18px]" /></div>
      <div className={`flex w-[19px] flex-col items-center justify-center ${blueSep}`}>
        <Icon size="h-[22px] w-[14px]" box="0 0 14 22">
          <circle cx="7" cy="5" r="3.5" stroke="#7b8794" strokeWidth="2.6" />
          <circle cx="7" cy="14" r="3.5" stroke="#7b8794" strokeWidth="2.6" />
          <path d="M3 12h9v9H3z" fill="#fff" stroke="#5f7fae" />
          <path d="m4 16 3 3 5-7" stroke="#1e5fc8" strokeWidth="2" />
        </Icon>
      </div>
      <div className={`w-[48px] pl-1 ${blueSep}`}><Drop label="Strumento" value="DXS" /></div>
      <div className={`w-[42px] pl-1 ${blueSep}`}><Drop label="Contratto" value="Full" /></div>
      <div className={`flex w-[203px] items-center gap-[3px] pl-[3px] ${blueSep}`}>
        {frames.map((f) => (
          <button
            key={f}
            className={`h-[18px] rounded-xs border border-[#4f78b0] px-[3px] ${f === "1m" ? "bg-[#7f9cc4]" : "bg-[#9fc4f4]"}`}
          >
            {f}
          </button>
        ))}
      </div>
      <div className={`w-[72px] pl-[5px] ${blueSep}`}><Drop label="Intervallo" value="1 minuto" /></div>
      <div className={`w-[78px] pl-[5px] ${blueSep}`}><Drop label="Storico" value="15 k unità" /></div>
      <button className={`flex w-[90px] items-center gap-1 pl-1.5 font-bold ${blueSep}`}>
        <Icon size="size-[22px]" box="0 0 22 22">
          <path d="M1 8c4-8 7-8 10 0s7 8 10 0" stroke="#2e9e2e" strokeWidth="1.8" />
          <path d="m1 4 5 2 9 8 6 1" stroke="#c83c3c" strokeWidth="1.5" />
          <path d="M1 16h6v5H1zM8 18h4v3H8zM16 16h5v5h-5z" fill="#1fae3c" />
          <path d="M6 17h3v4H6zM12 17h4v4h-4z" fill="#d83030" />
        </Icon>
        Indicatori
      </button>
      <button aria-label="Altri indicatori" className={`flex w-[16px] items-center justify-center ${blueSep}`}><Chevron /></button>
      <div className="flex items-center gap-1 pl-[7px] whitespace-nowrap">
        <Icon size="mr-0.5 size-[13px]" box="0 0 13 13">
          <rect x=".5" y=".5" width="12" height="12" rx="1" fill="#f4f8ff" stroke="#8a9ab0" />
          <path d="M6.500 2.500v2M5 6h2v4M5 10h4" stroke="#555" strokeWidth="1.4" />
        </Icon>
        <span>Micro DAX Full1224</span>
        <span className="font-bold text-[#a81428]">19.144</span>
        <span className="rounded-xs border border-[#c84850] bg-[#e4504f] px-[3px] leading-[14px] text-white">-0,63%</span>
        <span className="font-bold">21:05:39</span>
        <span className="ml-0.5 size-[9px] rounded-full bg-[#45a012]" />
      </div>
      <div className="ml-auto flex">
        <div className="flex w-[27px] items-center justify-center border-l border-[#4a76b4] bg-white">
          <Icon size="size-[20px]" box="0 0 20 20">
            <path d="M10 2C5 2 4 6 4 10" stroke="#e04444" strokeWidth="3" />
            <path d="M0 9h9l-4.500 7z" fill="#e04444" />
            <path d="M10 18c5 0 6-4 6-8" stroke="#18a828" strokeWidth="3" />
            <path d="M11 11h9l-4.500-7z" fill="#18a828" />
          </Icon>
        </div>
        <div className="flex items-center pr-1.5 pl-1.5">
          <Icon size="h-3.5 w-[46px]" box="0 0 46 14">
            <path d="M0 11.500h10" stroke="#3f66a0" strokeWidth="2.2" />
            <path d="M17.500 2v10h9V2z" stroke="#3f66a0" strokeWidth="1.4" />
            <path d="m34 2 10 10m0-10L34 12" stroke="#3f66a0" strokeWidth="2" />
          </Icon>
        </div>
      </div>
    </div>
  );
}

function QuoteButton({ label, last, className }: { label: string; last: string; className: string }) {
  return (
    <button className={`flex w-[74px] flex-col items-center text-white ${className}`}>
      <span className="mt-[5px] text-[11px] leading-[12px]">{label}</span>
      <span className="flex items-end leading-[28px]">
        <span className="text-[13px] leading-[20px]">1</span>
        <span className="text-2xl leading-[28px]">9.14</span>
        <span className="self-start text-[13px] leading-[22px]">{last}</span>
      </span>
    </button>
  );
}

function StopField({ name, value }: { name: string; value: string }) {
  return (
    <div className="flex h-full items-center gap-[3px] pl-2">
      <label className="flex items-center gap-1">
        <input type="checkbox" className="size-[13px] appearance-none rounded-xs border border-[#6b7f8a]" />
        {name}
      </label>
      <input
        aria-label={`Punti ${name}`}
        defaultValue={value}
        className="ml-0.5 h-[24px] w-[24px] rounded-xs border border-[#6b7f8a] text-center text-[#8a8a8a]"
      />
      <span className="text-[#9a9a9a]">pnt/ctr</span>
    </div>
  );
}

function OrderPanel() {
  return (
    <div className="flex h-[51px] justify-center border-b border-[#6d8590] bg-white">
      <div className="flex border-x border-[#6d8590]">
        <div className={`flex w-[31px] flex-col items-center gap-1 pt-1 ${sep}`}>
          <button aria-label="Opzioni" className="flex size-5 items-center justify-center rounded-xs border border-[#777] bg-[#f2f2f2]">
            <Wrench size="size-3.5" />
          </button>
          <button aria-label="Tastiera" className="mt-px">
            <Icon size="h-[16px] w-[20px]" box="0 0 20 16">
              <rect width="20" height="16" rx="2" fill="#2f62c0" />
              <path d="M3 4h14M3 8h14" stroke="#fff" strokeWidth="2" strokeDasharray="2 1" />
              <path d="M6 12.500h8" stroke="#fff" strokeWidth="2" />
            </Icon>
          </button>
        </div>
        <div className={`w-[168px] ${sep}`}>
          <div className="flex h-[15px] leading-[13px]">
            <button className="w-[60px]">Qtà</button>
            <button className="flex flex-1 items-center justify-center gap-1 rounded-bl-sm border-b border-l border-[#6d8590] bg-[#f0f0f0]">
              Qtà Auto <Bubble />
            </button>
          </div>
          <div className="mt-[5px] flex items-center pl-1.5">
            <input aria-label="Quantità" defaultValue="1" className="h-[24px] w-[61px] rounded-xs border border-[#6d8590] pr-0.5 text-right" />
            <div className="flex w-[19px] justify-center"><Chain /></div>
            <input aria-label="Euro per punto" defaultValue="1" className="h-[24px] w-[50px] rounded-xs border border-[#6d8590] pr-1.5 text-right" />
            <span className="pl-0.5">€/pt</span>
          </div>
        </div>
        <div className={`flex w-[71px] justify-center gap-2.5 pt-[7px] ${sep}`}>
          <button className="flex w-[23px] flex-col items-center gap-1">
            <Icon size="h-[22px] w-[23px]" box="0 0 23 22">
              <path d="M8 1.500h14v8H10m0 3h12v8H8M10 11h12" stroke="#7b8a92" />
              <path d="M3 0h3v5h2.500l-4 5L0 5h3z" fill="#e04040" />
              <path d="M3 22h3v-5h2.500l-4-5L0 17h3z" fill="#28a428" />
            </Icon>
            LIM
          </button>
          <button className="flex w-[23px] flex-col items-center gap-1">
            <Icon size="h-[22px] w-[23px]" box="0 0 23 22">
              <path d="M8 1.500h14v8H10m0 3h12v8H8M10 11h12" stroke="#7b8a92" />
              <path d="M3 10h3V5h2.500l-4-5L0 5h3z" fill="#28a428" />
              <path d="M3 12h3v5h2.500l-4 5L0 17h3z" fill="#e04040" />
            </Icon>
            STP
          </button>
        </div>
        <div className="relative flex">
          <QuoteButton label="V: MKT" last="4" className="bg-linear-to-b from-[#e65555] to-[#d84444]" />
          <QuoteButton label="A: MKT" last="5" className="bg-linear-to-b from-[#33c233] to-[#27b027]" />
          <span className="absolute top-0 left-[68px] w-[13px] rounded-b-xs bg-white text-center leading-[15px]">1</span>
        </div>
        <div className="flex w-[206px] flex-col">
          <label className="flex h-[19px] items-center justify-center gap-2 border-b border-[#6d8590]">
            <input
              type="checkbox"
              role="switch"
              className="h-[12px] w-[25px] appearance-none rounded-full border border-[#6b7f8a] before:block before:size-2.5 before:rounded-full before:bg-black"
            />
            Multi T/S <Bubble />
          </label>
          <div className="grid flex-1 grid-cols-2">
            <div className={sep}><StopField name="T" value="40" /></div>
            <StopField name="S" value="20" />
          </div>
        </div>
      </div>
    </div>
  );
}

function SideBar() {
  return (
    <aside className="flex w-[33px] shrink-0 flex-col items-center border-r border-[#6d8590]">
      <button aria-label="Scorri su" className="flex h-[14px] w-full items-center justify-center border-b border-[#6d8590] pt-px">
        <Icon size="size-2" box="0 0 8 8"><path d="m1 5.500 3-3 3 3" stroke="#566c78" strokeWidth="1.4" /></Icon>
      </button>
      <div className="flex flex-col pt-0.5">
        {tools.slice(0, 28).map((tool) => <ToolButton key={tool.name} {...tool} />)}
      </div>
      <button aria-label="Scorri giù" className="flex h-[13px] w-full items-center justify-center border-y border-[#6d8590] bg-[#b2d0dc]"><Chevron /></button>
      <button aria-label="Oggetti" className="mt-1">
        <Icon size="size-[26px]" box="0 0 26 26">
          <path d="M5 4h12l3 3v13H5z" fill="#e9f2ea" stroke="#889" />
          <path d="m8 18 2-5m3 5 1-5" stroke="#2e9e2e" strokeWidth="1.5" />
          <circle cx="6" cy="5" r="5.5" fill="#117a11" />
          <path d="m4.500 4 2-1.500V8" stroke="#fff" strokeWidth="1.5" />
          <path d="m12 20 4-4c-1-3 1-6 4-5l-1 3 2 1 3-1c1 3-2 5-5 4l-4 4z" fill="#fff" stroke="#222" />
          <path d="M16 21h9l-4.500 4z" fill="#000" />
        </Icon>
      </button>
      <button aria-label="Altro" className="mt-[18px]">
        <Icon size="h-[14px] w-[20px]" box="0 0 20 14">
          <g fill="#333d44"><circle cx="3" cy="4" r="2" /><circle cx="10" cy="4" r="2" /><circle cx="17" cy="4" r="2" /></g>
          <path d="M12 10h7l-3.500 3.500z" fill="#000" />
        </Icon>
      </button>
    </aside>
  );
}

function BottomBar() {
  return (
    <div className="flex h-7 items-center border-t border-b-2 border-[#47606e]">
      <button aria-label="Disegno" className="flex h-full w-[33px] items-center justify-center bg-[#8fa3ae]">
        <Icon size="size-[22px]" box="0 0 22 22">
          <path d="m2 20 3-16 3 12 3-11" stroke="#28a030" strokeWidth="1.4" />
          <path d="m1 2 11 8M5 5l4 14" stroke="#d82020" strokeWidth="1.6" />
          <path d="m11 17 2-6 6-9 3 2-6 10z" fill="#f8d840" stroke="#a87c20" strokeWidth=".8" />
        </Icon>
      </button>
      <button aria-label="Condividi" className="flex w-[27px] justify-center"><Share /></button>
      <button className="flex h-full w-[88px] items-center gap-1.5 bg-white pl-1 pt-px">
        <Icon size="size-[20px]" box="0 0 20 20">
          <path d="M9 1H3v18h6" stroke="#23588c" strokeWidth="5" />
          <path d="M12 1h5v18h-5" stroke="#8c8f92" strokeWidth="4.5" />
          <path d="M7 5h7v10H7z" fill="#fff" />
        </Icon>
        Analizzare
      </button>
      <div className="flex w-[108px] items-center justify-between pr-0.5 pl-1">
        <Icon size="size-[20px]" box="0 0 18 18">
          <path d="M1 0h8l3 3v10H1z" fill="#fff" stroke="#9aa5ab" />
          <path d="M5 5h13v9h-4l-3 4v-4H5z" fill="#2f6fdc" />
          <path d="M8 9.500h8" stroke="#fff" strokeWidth="2" strokeDasharray="2 1" />
        </Icon>
        <Icon size="size-[18px]" box="0 0 18 18">
          <path d="M2.500 1.500h13v15h-13z" fill="#eee" stroke="#444" />
          <path d="M5 5h5M5 8h8M5 11h8M5 14h5" stroke="#333" strokeWidth="1.4" />
          <path d="m10 3 2 3 4-4" stroke="#d02828" strokeWidth="2" />
          <path d="m10 14 2 3 4-4" stroke="#28a030" strokeWidth="2" />
        </Icon>
        <Icon size="size-[18px]" box="0 0 18 18">
          <path d="M1 1h8v4H1zM0 5.500h10v3H0zM3 9.500h6v3H3zM0 13.500h10v4H0z" fill="#28b838" stroke="#137020" strokeWidth=".7" />
          <path d="M10 1h6v4h-6zM10 5.500h8v3h-8zM10 9.500h8v3h-8zM10 13.500h5v4h-5z" fill="#e04848" stroke="#982020" strokeWidth=".7" />
        </Icon>
        <Icon size="size-[20px]" box="0 0 20 20">
          <path d="M1 1h13v11H1z" fill="#fff" stroke="#1e5fa8" strokeWidth="1.3" />
          <path d="M1 2h13" stroke="#1e5fa8" strokeWidth="2.5" />
          <path d="m3 9 3-4 2 3" stroke="#2e9e2e" strokeWidth="1.2" />
          <path d="M6 7h13v12H6z" fill="#fff" stroke="#1e5fa8" strokeWidth="1.3" />
          <path d="M6 8.500h13" stroke="#1e5fa8" strokeWidth="2.5" />
          <path d="m8 16 3-4 2 4 4-5" stroke="#d04040" strokeWidth="1.2" />
        </Icon>
      </div>
      <span className="w-[17px] text-center text-base leading-none text-[#47606e]">«</span>
      <div className="flex h-[17px] min-w-0 flex-1 border border-[#6d8590]">
        <button aria-label="Indietro" className="flex w-[16px] items-center justify-center border-r border-[#6d8590] bg-[#b0ced9]">
          <Icon size="size-2" box="0 0 8 8"><path d="m5.500 1-3 3 3 3" stroke="#111" strokeWidth="1.7" /></Icon>
        </button>
        <div className="flex-1" />
        <div className="w-[10px] border-x border-[#6d8590] bg-[#b0ced9]" />
        <div className="w-[56px]" />
        <button aria-label="Avanti" className="flex w-[16px] items-center justify-center border-l border-[#6d8590] bg-[#b0ced9]">
          <Icon size="size-2" box="0 0 8 8"><path d="m2.500 1 3 3-3 3" stroke="#111" strokeWidth="1.7" /></Icon>
        </button>
      </div>
      <div className="flex w-[228px] items-center justify-between pr-1 pl-1.5">
        <Icon size="size-[22px]" box="0 0 22 22">
          <path d="M4 2h17v15H4z" fill="#fff" />
          <path d="M4 2h17v5H4z" fill="#3f92c8" />
          <path d="M11 10h9M11 13h9" stroke="#e08080" strokeWidth="1.5" strokeDasharray="2 1" />
          <path d="M0 15.500 7 10v3h7v5H7v3.500z" fill="#42c842" stroke="#2a8a2a" strokeWidth=".7" />
        </Icon>
        <Icon size="size-[18px]" box="0 0 18 18">
          <path d="M0 6 7 0v4c6 0 10 3 9 8-1 3-3 5-5 5 4-6 1-9-4-8v4z" fill="#1c68dc" />
        </Icon>
        <Icon size="size-[18px]" box="0 0 18 18">
          <path d="m18 6-7-6v4C5 4 1 7 2 12c1 3 3 5 5 5-4-6-1-9 4-8v4z" fill="#78a8d8" />
        </Icon>
        <Icon size="size-[20px]" box="0 0 20 20">
          <path d="M2 10h6v8H2zM5 7v13" fill="#d84848" stroke="#901818" />
          <path d="M12 3h6v13h-6zM15 0v19" fill="#38b848" stroke="#147028" />
          <path d="m4 16 5-5c-1-3 2-6 5-5l-2 3 2 2 3-2c0 4-3 5-5 5l-5 5z" fill="#fff" stroke="#111" />
        </Icon>
        <Icon size="size-[20px]" box="0 0 20 20">
          <circle cx="8" cy="7" r="6" fill="#d9d9d9" stroke="#111" />
          <path d="m12 11 6 7" stroke="#111" strokeWidth="3" />
          <path d="M17 1v10m-2-8 2-2 2 2m-4 6 2 2 2-2M1 17.500h10m-8-2-2 2 2 2m6-4 2 2-2 2" stroke="#0a20e0" strokeWidth="1.3" />
        </Icon>
        <Magnifier sign="M5 8h6" />
        <Magnifier sign="M5 8h6M8 5v6" />
        <Icon size="size-[18px]" box="0 0 18 18">
          <path d="M0 2h18v5H0z" fill="#f0f0f0" />
          <path d="M1 4.500h16" stroke="#333" strokeWidth="2.5" strokeDasharray="3 1" />
          <path d="M7.500 9h3v3H13l-4 5-4-5h2.500z" fill="#2464d0" />
        </Icon>
      </div>
    </div>
  );
}

function PortfolioBar() {
  return (
    <div className="flex h-7 items-stretch border-b-2 border-[#47606e] bg-linear-to-b from-[#b7d5e1] to-[#9ebdca]">
      <div className={`flex w-[26px] items-center justify-center ${sep}`}><Candles size="size-[18px]" /></div>
      <div className={`flex w-[19px] items-center justify-center ${sep}`}><Chain /></div>
      <button className={`w-[70px] pl-[5px] text-left ${sep}`}>Portafoglio</button>
      <div className={`flex w-[141px] items-center gap-0.5 pl-0.5 font-bold whitespace-nowrap ${sep}`}>
        <Icon size="size-[24px]" box="0 0 24 24">
          <path d="M4 15C3 9 6 5 11 5m-2-3 3 3-3 3M20 8c1 6-1 11-7 11m2 3-3-3 3-3" stroke="#111" strokeWidth="1.5" />
          <g fill="#f4d42c" stroke="#8c7a10" strokeWidth=".8">
            <ellipse cx="18" cy="6" rx="5.500" ry="2.300" /><ellipse cx="18" cy="3.500" rx="5.500" ry="2.300" />
            <ellipse cx="6" cy="20.500" rx="5.500" ry="2.300" /><ellipse cx="6" cy="18" rx="5.500" ry="2.300" />
          </g>
        </Icon>
        Altre valute : 0,00 €
      </div>
      <div className={`w-[99px] pl-[5px] ${sep}`}><Drop label="Gruppo" value="Gruppo: Nulla" bold={false} /></div>
      <button aria-label="Opzioni portafoglio" className="pl-[5px]"><Wrench fill="#c8dde5" /></button>
      <div className={`ml-auto flex items-center gap-3 pr-1.5 ${sep}`}>
        <Icon size="size-[17px]" box="0 0 17 17"><path d="M1 1h15v5H1z" fill="#fbb850" stroke="#d08c28" /><path d="M7 6h4v5h2.500L9 16l-4.500-5H7z" fill="#2464c8" /></Icon>
        <Icon size="size-[17px]" box="0 0 17 17"><path d="M1 11h15v5H1z" fill="#fbb850" stroke="#d08c28" /><path d="M7 11h4V6h2.500L9 1 4.500 6H7z" fill="#2464c8" /></Icon>
        <Chevron />
      </div>
      <div className={`flex w-[126px] items-center gap-2 pl-[5px] whitespace-nowrap ${sep}`}>
        <span>Posizioni: <b>0</b></span>
        <span>Ordini: <b>0</b></span>
      </div>
      <div className={`flex w-[94px] items-center justify-center ${sep}`}>
        <button className="h-[18px] w-[86px] rounded-xs border border-[#6d8590] text-[#7d97a4]">Chiudere tutto</button>
      </div>
      <div className="flex w-[102px] items-center gap-2 pl-[3px]">
        <Share />
        <span className="pl-1 font-bold text-[#6b8693]">?</span>
        <Icon size="h-3.5 w-[46px]" box="0 0 46 14">
          <path d="M0 11.500h9" stroke="#6b8693" strokeWidth="2" />
          <path d="M17.500 2v10h9V2z" stroke="#6b8693" strokeWidth="1.4" />
          <path d="m34 2 9 10m0-10-9 10" stroke="#6b8693" strokeWidth="2" />
        </Icon>
      </div>
    </div>
  );
}

const apps: { name: string; icon: ReactNode }[] = [
  { name: "Visualizzazione attività", icon: <><path d="M8 1h15v18H8z" fill="#ececec" /><path d="M0 7h14v16H0z" fill="#8f9294" fillOpacity=".85" /></> },
  {
    name: "Teams",
    icon: <><circle cx="12" cy="4.500" r="3.500" fill="#7b83eb" /><circle cx="20" cy="6" r="2.500" fill="#5059c9" /><path d="M7 8h12v8c0 8-11 8-12 1zM19 9h5v6c0 3-3 4-5 3z" fill="#5b62cf" /><path d="M0 7h11v11H0z" fill="#4048b0" /><path d="M2.500 10h6M5.500 10v6" stroke="#fff" strokeWidth="1.500" /></>,
  },
  {
    name: "Edge",
    icon: <><circle cx="12" cy="12" r="11.500" fill="#1b8ad6" /><path d="M1 10C3-3 23-3 23.500 11c0 5-6 6-9 4 3-5-3-10-13-5z" fill="#42cf9a" /><path d="M1 10c4-5 12-5 12 1-4 0-5 9 7 9C11 28-1 21 1 10z" fill="#1268b8" /><path d="M12 11c-3 2-2 9 9 7-3 2-9 1-11-2-1-3 0-4 2-5z" fill="#12304c" /></>,
  },
  { name: "Esplora file", icon: <><path d="M0 2h9l3 3h12v17H0z" fill="#f8c53c" /><path d="M0 2h9v4H0z" fill="#d89c1c" /><path d="M4 22v-5c0-1 1-2 2-2h12c1 0 2 1 2 2v5z" fill="#2470b8" /></> },
  { name: "Store", icon: <><path d="M1 5h22v15c0 2-1 3-3 3H4c-2 0-3-1-3-3z" fill="#f2f4f6" /><path d="M7 6V1h10v5" stroke="#2fa8e8" strokeWidth="2" /><path d="M7 9h4.500v4.500H7z" fill="#e8502c" /><path d="M12.500 9H17v4.500h-4.500z" fill="#78b42c" /><path d="M7 14.500h4.500V19H7z" fill="#2f92e0" /><path d="M12.500 14.500H17V19h-4.500z" fill="#f8b82c" /></> },
  { name: "Posta", icon: <><path d="m0 8 12-8 12 8v15H0z" fill="#1c70c0" /><path d="M0 8h24v15H0z" fill="#36b0f0" /><path d="m1 8 11 8L23 8z" fill="#fff" /><path d="m0 23 12-10 12 10z" fill="#2094dc" /></> },
  { name: "Poliedro", icon: <><path d="m12 1 9 6v10l-9 6-9-6V7z" fill="#6f767b" /><path d="m12 1 9 6-5 3-4-4-7 11-2-2V7z" fill="#9ba2a6" /><path d="m12 6 4 10-8 2z" fill="#23292d" /></> },
  { name: "Cristallo", icon: <><path d="m12 0 11 12-11 12L1 12z" fill="#8fc0e4" /><path d="m12 0 5 12-5 12-5-12z" fill="#bfe0f4" /><circle cx="12" cy="12" r="4" stroke="#5f94c0" /><path d="M12 9v6" stroke="#5f94c0" strokeWidth="1.5" /></> },
  { name: "Stampa", icon: <><path d="M0 0h24v24H0z" fill="#0f86b8" /><path d="M7 6V3h10v3M4 16V8h15v2M7 10h5m-5 3h5M7 10v11h7M15.500 12.500h5v9h-5zM9 17h4" stroke="#fff" strokeWidth="1.4" /></> },
  { name: "Scanner", icon: <><path d="M0 0h24v24H0z" fill="#2466d8" /><path d="M3 4 20 17M2 20h19v-4H2" stroke="#fff" strokeWidth="1.800" /></> },
  { name: "WhatsApp", icon: <><path d="M2 22.500 3.500 17A10.500 10.500 0 1 1 7.500 21z" stroke="#2cc860" strokeWidth="2.200" /><path d="M8 6.500c-3 4 5 12 9 9.500l.5-2-3-1.500-1.500 1.500c-2-1-3-2-3.500-3.500L11 9l-1-3z" fill="#2cc860" /></> },
  { name: "MyASUS", icon: <><path d="M0 0h24v24H0z" fill="#3a50e8" /><path d="M0 8 16 24H0z" fill="#6a34dc" /><path d="m4 18 5-12h2v8l4-8h2v6l3-6-1 12h-2v-6l-3 6h-2v-6l-4 6z" fill="#fff" /></> },
];

function TaskBar() {
  return (
    <footer className="flex h-12 items-center justify-between bg-[#22292d] font-['Noto_Sans',sans-serif] text-[12px] text-[#f2f2f2]">
      <div className="flex flex-1 items-center pl-[17px]">
        <Icon size="h-[26px] w-[28px]" box="0 0 28 26">
          <path d="M12 0c-1 5 3 8 9 8-1 6-9 10-14 5-2-2-4-3-6-2 4-1 9-3 11-11z" fill="#f4a838" />
          <path d="M7 24a5.500 5.500 0 0 1-1-11c2-5 11-5 13 0 7-1 9 10 2 11z" fill="#b4cdf0" />
          <path d="M7 24c-3 0-5-2-5-5 8 4 17 3 23-1 1 3-1 6-4 6z" fill="#8fb2e8" />
        </Icon>
        <div className="pl-[5px] leading-4">
          <div>11°C</div>
          <div className="text-[#c8ccce]">Mostly cloudy</div>
        </div>
        <Icon size="ml-12 mt-6 h-6 w-[72px]" box="0 0 72 24">
          <path d="M13 26C18 3 54 3 59 26" stroke="#8fb4c8" strokeWidth="7" />
          <path d="M15 24C22 3 50 3 57 24" stroke="#e4f0f6" strokeWidth="2.500" />
          <ellipse cx="8" cy="9" rx="5" ry="7" fill="#6c7078" stroke="#d8dcdf" strokeWidth="2" transform="rotate(-35 8 9)" />
          <ellipse cx="64" cy="13" rx="5" ry="7" fill="#545c70" stroke="#9ca8bc" strokeWidth="2" transform="rotate(35 64 13)" />
        </Icon>
      </div>
      <div className="ml-3.5 flex items-center">
        <button aria-label="Start" className="mr-[13px]">
          <Icon>
            <path d="M0 0h11.500v11.500H0zM12.500 0H24v11.500H12.500zM0 12.500h11.500V24H0zM12.500 12.500H24V24H12.500z" fill="#3ab4f4" />
          </Icon>
        </button>
        <label className="mr-[3px] flex h-[30px] w-[218px] items-center gap-3 rounded-full bg-[#f3f3f3] pl-3">
          <Icon size="size-4" box="0 0 16 16">
            <circle cx="7" cy="6.5" r="5.5" stroke="#222" strokeWidth="1.5" />
            <path d="m11 11 4 4.500" stroke="#222" strokeWidth="1.8" />
          </Icon>
          <input aria-label="Cerca" placeholder="Cerca" className="w-40 text-[13px] outline-none placeholder:text-[#555]" />
        </label>
        {apps.map((app) => (
          <button key={app.name} aria-label={app.name} className="relative flex h-10 w-11 items-center justify-center">
            <Icon>{app.icon}</Icon>
            {app.name === "Edge" && <span className="absolute bottom-0 h-[3px] w-1.5 rounded-full bg-[#9a9ea0]" />}
          </button>
        ))}
        <button aria-label="ProRealTime" className="relative mx-0.5 flex size-10 items-center justify-center rounded-sm border border-[#3d4448] bg-[#2e3539]">
          <span className="flex size-[22px] items-center justify-center rounded-xs bg-black"><Candles size="size-[16px]" color="#45b03c" /></span>
          <span className="absolute bottom-0 h-[3px] w-4 rounded-full bg-[#cdc174]" />
        </button>
      </div>
      <div className="flex flex-1 items-center justify-end pr-5">
        <Icon size="mr-[22px] size-3" box="0 0 12 12"><path d="m1 8.500 5-5 5 5" stroke="#f2f2f2" strokeWidth="1.5" /></Icon>
        <div className="mr-4 text-center leading-4"><div>ENG</div><div>INTL</div></div>
        <Icon size="h-4 w-[64px]" box="0 0 64 16">
          <path d="M1 7q7-7 14 0M3 9.500q5-5 10 0M5.500 12q2.500-2.500 5 0" stroke="#f2f2f2" strokeWidth="1.3" />
          <circle cx="8" cy="13.500" r="1.200" fill="#f2f2f2" />
          <path d="M24 6h3l4-3.500v11L27 10h-3zM33 6q1.500 2 0 4m2-6q3 4 0 8" stroke="#f2f2f2" strokeWidth="1.1" />
          <path d="M53 4.500h5c1 0 2 .5 2 2v4c0 1-.5 2-2 2H50c-1 0-2-.5-2-2V9M62 7v3" stroke="#f2f2f2" strokeWidth="1.3" />
          <path d="m50 1-3 5h3l-1 5 4-6h-3z" fill="#f2f2f2" />
        </Icon>
        <div className="ml-3 text-right leading-4"><div>21:05</div><div>07/10/2024</div></div>
        <Icon size="ml-2 size-[16px]" box="0 0 16 16">
          <path d="M2 12.500h12L12.500 10V6c0-6-9-6-9 0v4zM6 13c0 3 4 3 4 0" stroke="#f2f2f2" strokeWidth="1.3" />
        </Icon>
      </div>
    </footer>
  );
}

export default function App() {
  return (
    <div className="min-h-screen bg-[#22292d] font-['Liberation_Sans',Arial,sans-serif] text-[12px] leading-4 text-black">
      <div className="border-x border-[#47606e] bg-[#9bb9c7]">
        <MenuBar />
        <ToolBar />
        <ChartBar />
        <main className="flex">
          <SideBar />
          <section className="min-w-0 flex-1">
            <OrderPanel />
            <ProfitPane />
            <PositionsPane />
            <PricePane />
            <TimeAxis />
          </section>
        </main>
        <BottomBar />
        <PortfolioBar />
      </div>
      <TaskBar />
    </div>
  );
}
